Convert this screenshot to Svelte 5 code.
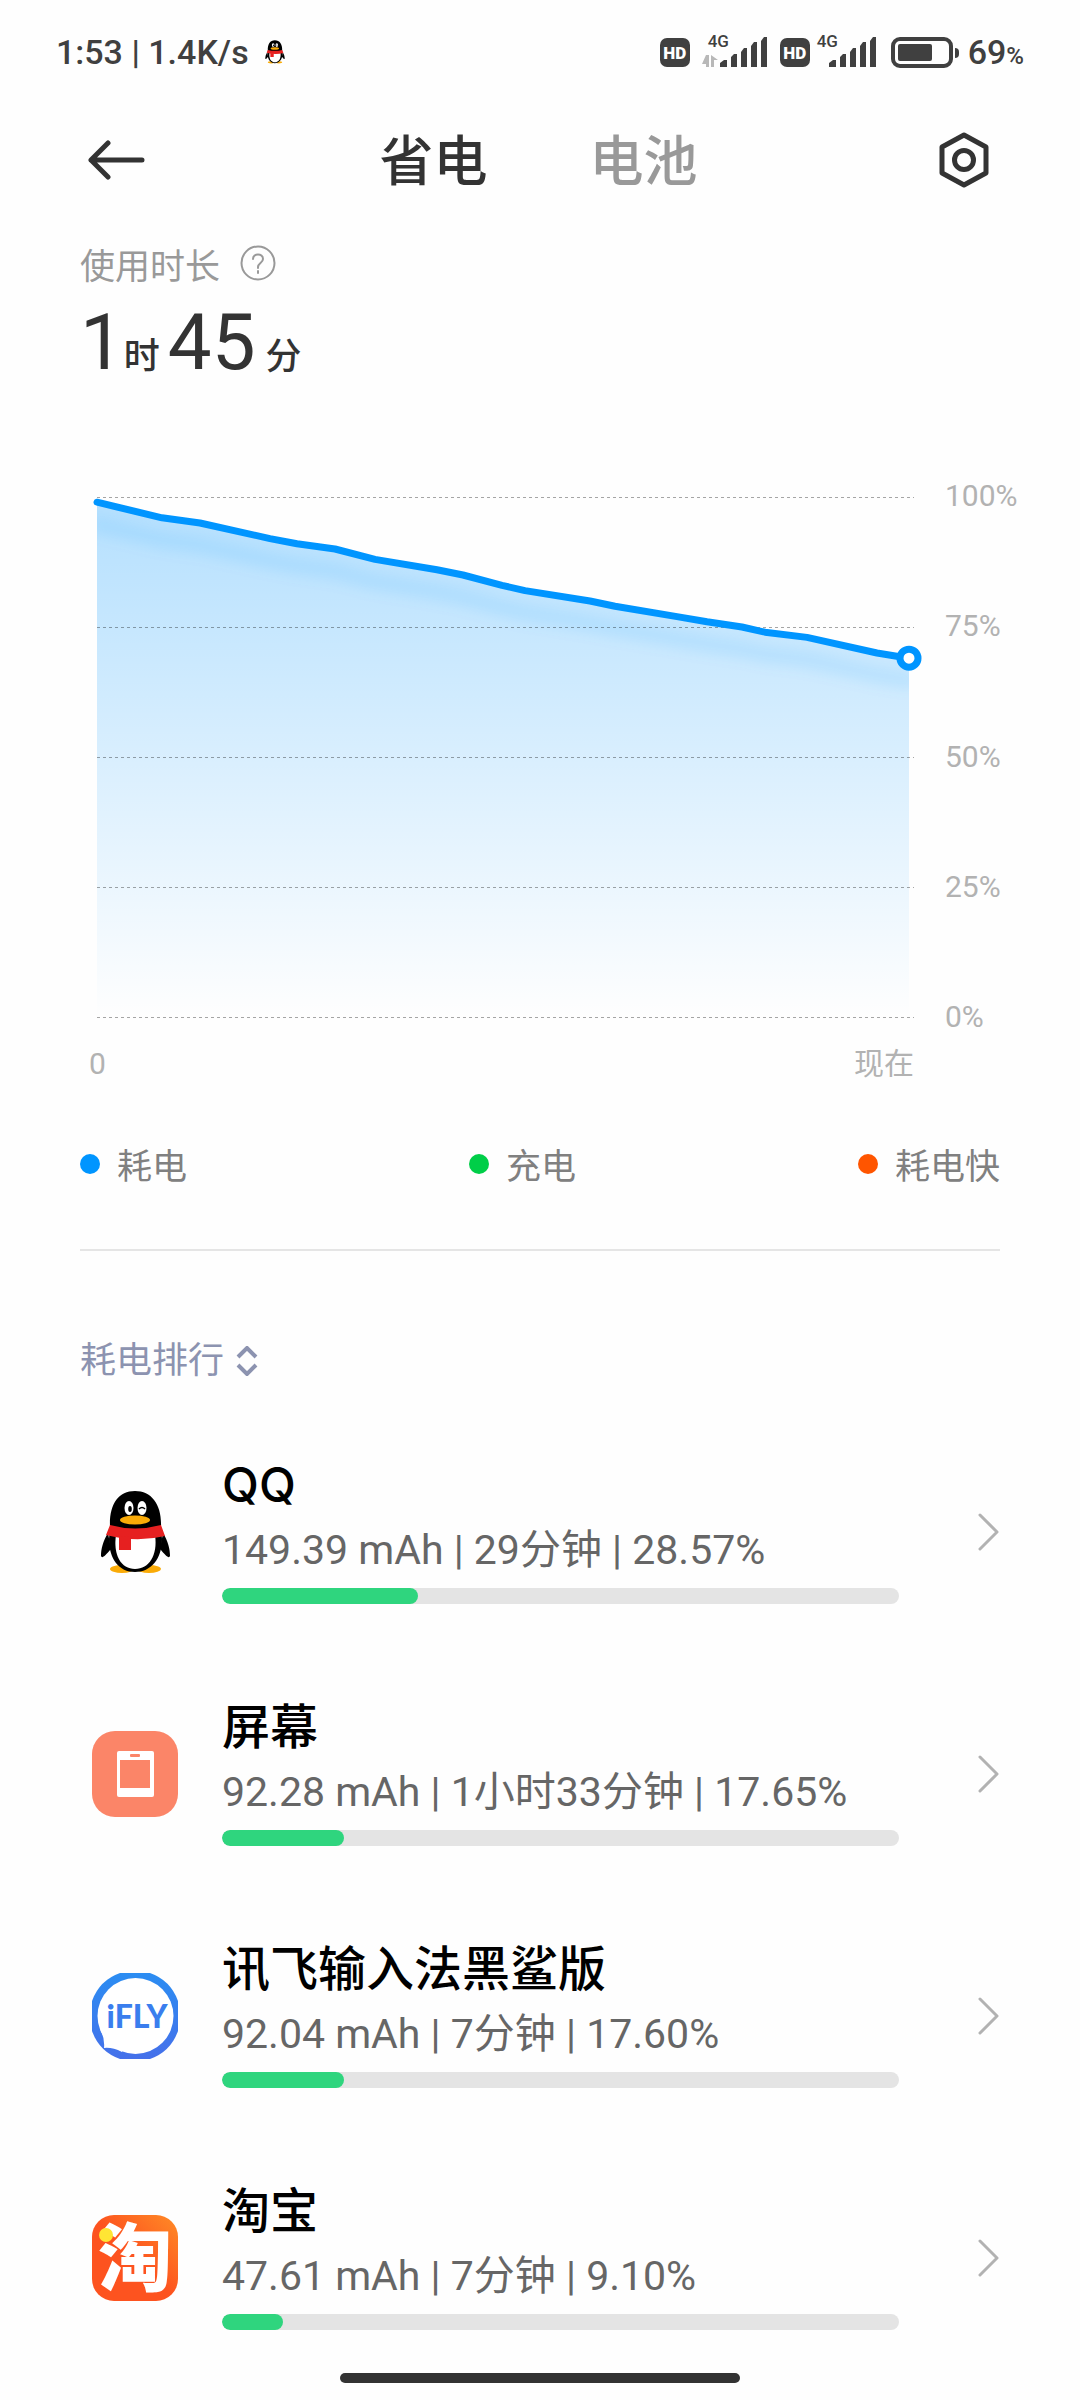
<script>
	const tabs = ['省电', '电池'];
	let activeTab = $state('省电');

	const scale = ['100%', '75%', '50%', '25%', '0%'];
	const gridLines = [0, 130, 260, 390, 520];

	// [x, battery level]
	const levels = [
		[0, 99],
		[65, 96],
		[103, 95],
		[173, 92],
		[200, 91],
		[238, 90],
		[278, 88],
		[340, 86],
		[366, 85],
		[405, 83],
		[428, 82],
		[493, 80],
		[518, 79],
		[580, 77],
		[610, 76],
		[645, 75],
		[668, 74],
		[710, 73],
		[780, 70],
		[812, 69]
	];

	const toY = (level) => (100 - level) * 5.2;
	const line = levels.map(([x, level]) => `${x},${toY(level)}`).join(' ');
	const [lastX, lastLevel] = levels[levels.length - 1];

	const legend = [
		{ label: '耗电', kind: 'drain' },
		{ label: '充电', kind: 'charge' },
		{ label: '耗电快', kind: 'fast' }
	];

	const apps = [
		{ id: 'qq', name: 'QQ', power: '149.39', time: '29分钟', percent: '28.57' },
		{ id: 'screen', name: '屏幕', power: '92.28', time: '1小时33分钟', percent: '17.65' },
		{ id: 'ifly', name: '讯飞输入法黑鲨版', power: '92.04', time: '7分钟', percent: '17.60' },
		{ id: 'taobao', name: '淘宝', power: '47.61', time: '7分钟', percent: '9.10' }
	];
</script>

{#snippet penguin()}
	<ellipse cx="30" cy="80" rx="12" ry="4" fill="#faab07" />
	<ellipse cx="57" cy="80" rx="12" ry="4" fill="#faab07" />
	<path d="M16 44C11 52 9 60 9 67c1 3 4 0 10-7zM71 44c5 8 7 16 7 23-1 3-4 0-10-7z" />
	<path d="M18 38C17 16 26 2 43 2s27 14 26 36l1 12c0 20-11 33-27 33S17 70 17 50z" />
	<path d="M24 46h39c3 20-6 34-20 34S21 66 24 46z" fill="#fff" />
	<path d="M18 36q25 7 51 0l4 11q-29 7-59-1z" fill="#e62020" />
	<path d="M27 47l12 1v13H27z" fill="#e62020" />
	<ellipse cx="43" cy="31" rx="15" ry="4.5" fill="#faab07" />
	<ellipse cx="37" cy="19" rx="4.5" ry="7" fill="#fff" />
	<ellipse cx="50" cy="19" rx="4.5" ry="7" fill="#fff" />
	<ellipse cx="38" cy="20" rx="1.8" ry="3" />
	<path d="M47 20q3-3 6 0" fill="none" stroke="#000" stroke-width="1.5" />
{/snippet}

{#snippet signal()}
	<svg class="bars" viewBox="0 0 48 30" aria-hidden="true">
		<path
			d="M0 30v-4l4-3h3v7zM11 30V20l3-3h3v13zM21 30V15l3-4h3v19zM31 30V9l3-4h3v25zM41 30V4l3-4h3v30z"
		/>
	</svg>
{/snippet}

<div class="page">
	<div class="status">
		<div class="status-side">
			<span>1:53 | 1.4K/s</span>
			<svg class="mini" viewBox="8 2 71 83" aria-hidden="true">{@render penguin()}</svg>
		</div>
		<div class="status-side right">
			<span class="hd">HD</span>
			<span class="cell data">
				<small>4G</small>
				<svg class="arrows" viewBox="0 0 16 12" aria-hidden="true">
					<path d="M4 0h3v12H4V9H0zM9 0l7 5h-4v7H9z" />
				</svg>
				{@render signal()}
			</span>
			<span class="hd">HD</span>
			<span class="cell">
				<small>4G</small>
				{@render signal()}
			</span>
			<svg class="battery" viewBox="0 0 69 31" aria-hidden="true">
				<rect x="2" y="2" width="58" height="27" rx="7" fill="none" stroke="#404040" stroke-width="4" />
				<rect x="7" y="7" width="34" height="17" rx="2" />
				<path d="M64 11q4 0 4 4v2q0 4-4 4z" />
			</svg>
			<span class="level">69<small>%</small></span>
		</div>
	</div>

	<header>
		<button class="icon-button" aria-label="返回">
			<svg width="57" height="40" viewBox="0 0 57 40">
				<path d="M54 20H3L20 3M3 20l17 17" />
			</svg>
		</button>
		<nav>
			{#each tabs as tab}
				<button class:active={tab === activeTab} onclick={() => (activeTab = tab)}>{tab}</button>
			{/each}
		</nav>
		<button class="icon-button end" aria-label="设置">
			<svg width="50" height="56" viewBox="0 0 50 56">
				<path d="M25 3l22 12v26L25 53 3 41V15z" />
				<circle cx="25" cy="28" r="9.5" />
			</svg>
		</button>
	</header>

	<section class="usage">
		<div class="usage-label">
			<span>使用时长</span>
			<button class="icon-button help" aria-label="说明">
				<svg width="36" height="36" viewBox="0 0 36 36">
					<circle cx="18" cy="18" r="16.5" />
					<path d="M13 14c0-6 10-6 10 0 0 4-5 4-5 8v1" />
					<path d="M18 26v2" />
				</svg>
			</button>
		</div>
		<p class="duration">1<small>时</small>45<small class="spaced">分</small></p>
	</section>

	<section class="chart">
		<svg class="plot" viewBox="0 0 817 520" role="img" aria-label="电量">
			<defs>
				<linearGradient id="fade" x1="0" y1="0" x2="0" y2="1">
					<stop offset="0" stop-color="#0095ff" stop-opacity="0.29" />
					<stop offset="1" stop-color="#0095ff" stop-opacity="0" />
				</linearGradient>
				<clipPath id="under">
					<polygon points="0,520 {line} {lastX},520" />
				</clipPath>
				<filter id="soft" x="-10%" y="-20%" width="120%" height="150%">
					<feGaussianBlur stdDeviation="7" />
				</filter>
			</defs>
			<polygon points="0,520 {line} {lastX},520" fill="url(#fade)" />
			<g clip-path="url(#under)">
				<polyline class="shade" points={line} transform="translate(0 22)" filter="url(#soft)" />
			</g>
			{#each gridLines as y}
				<path class="grid" d="M0 {y}H817" />
			{/each}
			<polyline class="line" points={line} />
			<circle cx={lastX} cy={toY(lastLevel)} r="9" fill="#fff" stroke="#0095ff" stroke-width="7" />
		</svg>
		<ul class="scale">
			{#each scale as mark}
				<li>{mark}</li>
			{/each}
		</ul>
		<div class="times">
			<span>0</span>
			<span>现在</span>
		</div>
	</section>

	<ul class="legend">
		{#each legend as item}
			<li class={item.kind}>{item.label}</li>
		{/each}
	</ul>

	<button class="sort">
		耗电排行
		<svg width="22" height="30" viewBox="0 0 22 30" aria-hidden="true">
			<path d="M2 11l9-9 9 9M2 19l9 9 9-9" />
		</svg>
	</button>

	<ul class="apps">
		{#each apps as app}
			<li>
				<a href="#{app.id}">
					<svg class="app-icon" viewBox="0 0 86 86" aria-hidden="true">
						{#if app.id === 'qq'}
							{@render penguin()}
						{:else if app.id === 'screen'}
							<rect width="86" height="86" rx="23" fill="#fb8568" />
							<rect x="25" y="20" width="37" height="46" rx="2" fill="#fff" />
							<path d="M28 29h30v28H28z" fill="#fb8568" />
							<rect x="38" y="23" width="10" height="3" rx="1" fill="#fb8568" />
						{:else if app.id === 'ifly'}
							<linearGradient id="ifly" x1="0" y1="0" x2="0" y2="1">
								<stop offset="0" stop-color="#2b8df2" />
								<stop offset="1" stop-color="#4570ea" />
							</linearGradient>
							<path
								d="M28 0h30a46 46 0 0 1 28 28v30a46 46 0 0 1-28 28H28A46 46 0 0 1 0 58V28A46 46 0 0 1 28 0z"
								fill="url(#ifly)"
							/>
							<circle cx="43.5" cy="43" r="38" fill="#fff" />
							<path d="M8 56q5 9 4 19 8-1 18 4l4-12z" fill="#fff" />
							<text class="ifly" x="45" y="55" text-anchor="middle">iFLY</text>
						{:else}
							<linearGradient id="taobao" x1="0" y1="1" x2="1" y2="0">
								<stop offset="0.5" stop-color="#fd531f" />
								<stop offset="1" stop-color="#ff8c26" />
							</linearGradient>
							<rect width="86" height="86" rx="22" fill="url(#taobao)" />
							<text class="taobao" x="43" y="70" text-anchor="middle">淘</text>
							<circle cx="14" cy="20" r="7" fill="#ffe534" />
						{/if}
					</svg>
					<div class="info">
						<h2>{app.name}</h2>
						<p>{app.power} mAh | {app.time} | {app.percent}%</p>
						<progress value={Math.round(app.percent)} max="100" aria-label={app.name}></progress>
					</div>
					<svg class="chevron" viewBox="0 0 21 38" aria-hidden="true">
						<path d="M2 2l17 17L2 36" />
					</svg>
				</a>
			</li>
		{/each}
	</ul>

	<div class="home-bar"></div>
</div>

<style>
	:global(body) {
		background: #fefefe;
	}

	.page {
		font-family: Roboto, 'Noto Sans CJK SC', sans-serif;
		color: #333;
	}

	ul {
		list-style: none;
		margin: 0;
		padding: 0;
	}

	button {
		font: inherit;
		color: inherit;
		background: none;
		border: none;
		padding: 0;
		cursor: pointer;
	}

	.status {
		display: flex;
		justify-content: space-between;
		align-items: center;
		height: 104px;
		padding: 0 56px;
		font-size: 34px;
		font-weight: 500;
		color: #404040;
		fill: #404040;
	}

	.status-side {
		display: flex;
		align-items: center;
		gap: 16px;
	}

	.right {
		gap: 14px;
	}

	.mini {
		width: 20px;
		height: 24px;
		fill: #000;
	}

	.hd {
		width: 30px;
		height: 29px;
		border-radius: 7px;
		background: #404040;
		color: #fff;
		font-size: 17px;
		font-weight: 900;
		line-height: 30px;
		text-align: center;
	}

	.cell {
		position: relative;
		display: flex;
		height: 30px;
		margin-left: -7px;
		padding-left: 12px;
	}

	.cell.data {
		padding-left: 18px;
		margin: 0 -2px;
	}

	.cell small {
		position: absolute;
		left: 0;
		top: -4px;
		font-size: 17px;
		line-height: 17px;
	}

	.data small {
		left: 6px;
	}

	.arrows {
		position: absolute;
		left: 0;
		bottom: 0;
		width: 16px;
		height: 12px;
		fill: #b8b8b8;
	}

	.bars {
		width: 48px;
		height: 30px;
	}

	.battery {
		width: 69px;
		height: 31px;
	}

	.level {
		margin-left: -6px;
	}

	.level small {
		font-size: 24px;
	}

	header {
		display: grid;
		grid-template-columns: 1fr auto 1fr;
		align-items: center;
		height: 112px;
		padding: 0 91px 0 88px;
	}

	nav {
		display: flex;
		gap: 102px;
		padding-top: 6px;
	}

	nav button {
		font-size: 54px;
		font-weight: 500;
		line-height: 80px;
		color: #999;
	}

	nav .active {
		color: #333;
	}

	.icon-button {
		display: flex;
	}

	.icon-button svg {
		fill: none;
		stroke: #333;
		stroke-width: 5;
		stroke-linecap: round;
		stroke-linejoin: round;
	}

	.icon-button.end {
		justify-self: end;
	}

	.icon-button.help svg {
		stroke: #999;
		stroke-width: 2;
	}

	.usage {
		padding: 25px 80px 0;
	}

	.usage-label {
		display: flex;
		align-items: center;
		gap: 20px;
		height: 44px;
		font-size: 35px;
		color: #999;
	}

	.duration {
		margin: 0;
		height: 108px;
		font-size: 78px;
		line-height: 116px;
	}

	.duration small {
		font-size: 36px;
		font-weight: 500;
		line-height: 36px;
		margin-right: 8px;
	}

	.duration .spaced {
		margin-left: 10px;
	}

	.chart {
		display: grid;
		grid-template-columns: 1fr 72px;
		column-gap: 31px;
		padding: 104px 63px 0 97px;
		font-size: 30px;
		line-height: 36px;
		color: #b2b2b2;
	}

	.plot {
		width: 100%;
		overflow: visible;
	}

	.grid {
		stroke: #000;
		stroke-opacity: 0.35;
		stroke-width: 1;
		stroke-dasharray: 3 3;
		shape-rendering: crispEdges;
	}

	.line,
	.shade {
		fill: none;
		stroke: #0095ff;
		stroke-width: 7;
		stroke-linecap: round;
		stroke-linejoin: round;
	}

	.shade {
		stroke-width: 16;
		stroke-opacity: 0.1;
	}

	.scale {
		display: flex;
		flex-direction: column;
		justify-content: space-between;
		margin: -19px 0 -18px;
	}

	.times {
		display: flex;
		justify-content: space-between;
		margin: 29px 0 0 -8px;
	}

	.legend {
		display: flex;
		justify-content: space-between;
		margin: 0 80px;
		padding: 56px 0 59px;
		border-bottom: 2px solid #e5e5e5;
		font-family: 'Noto Sans CJK SC', sans-serif;
		font-size: 35px;
		line-height: 52px;
		color: #808080;
	}

	.legend li {
		display: flex;
		align-items: center;
		gap: 17px;
	}

	.legend li::before {
		content: '';
		width: 20px;
		height: 20px;
		border-radius: 50%;
		background: #0095ff;
	}

	.legend .charge::before {
		background: #00ce48;
	}

	.legend .fast::before {
		background: #ff5500;
	}

	.sort {
		display: flex;
		align-items: center;
		gap: 12px;
		margin: 84px 80px 24px;
		font-size: 36px;
		line-height: 52px;
		color: #8c93b0;
	}

	.sort svg {
		fill: none;
		stroke: #8c93b0;
		stroke-width: 4;
	}

	.apps a {
		display: flex;
		align-items: center;
		height: 242px;
		padding: 0 81px 0 92px;
		color: inherit;
		text-decoration: none;
	}

	.app-icon {
		width: 86px;
		height: 86px;
		overflow: visible;
	}

	.info {
		flex: 1;
		margin: 0 79px 0 44px;
		padding-bottom: 6px;
	}

	h2 {
		margin: 0;
		height: 62px;
		font-family: Inter, 'Noto Sans CJK SC', sans-serif;
		font-size: 48px;
		font-weight: 500;
		line-height: 62px;
		color: #000;
	}

	.info p {
		margin: 0;
		height: 72px;
		font-size: 41px;
		line-height: 68px;
		color: #666;
	}

	progress {
		display: block;
		appearance: none;
		width: 100%;
		height: 16px;
		border: none;
		border-radius: 8px;
		overflow: hidden;
		background: #e4e4e4;
	}

	progress::-webkit-progress-bar {
		background: #e4e4e4;
	}

	progress::-webkit-progress-value {
		border-radius: 8px;
		background: #2fd57e;
	}

	.chevron {
		width: 21px;
		height: 38px;
		fill: none;
		stroke: #b2b2b2;
		stroke-width: 3;
		stroke-linecap: round;
		stroke-linejoin: round;
	}

	.ifly {
		font: 900 32px Lato, sans-serif;
		fill: #3a7eee;
	}

	.taobao {
		font: 900 74px 'Noto Sans CJK SC', sans-serif;
		fill: #fff;
	}

	.home-bar {
		position: fixed;
		left: 50%;
		bottom: 17px;
		width: 400px;
		height: 10px;
		margin-left: -200px;
		border-radius: 5px;
		background: #333;
	}
</style>
